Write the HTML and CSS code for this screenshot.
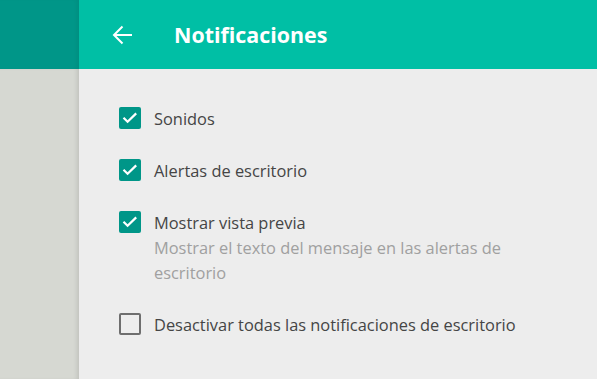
FILE: index.html
```html
<!DOCTYPE html>
<html lang="es">
<head>
  <meta charset="utf-8">
  <title>Notificaciones</title>
  <link rel="stylesheet" href="styles.css">
</head>
<body>
  <div class="app">
    <!-- Left strip of the chat list behind the drawer -->
    <aside class="side">
      <div class="side-header"></div>
      <div class="side-body"></div>
    </aside>

    <section class="drawer">
      <header class="drawer-header">
        <button class="back" type="button" aria-label="Atrás">
          <svg viewBox="0 0 20 20" width="20" height="20" fill="none" stroke="#fff" stroke-width="2">
            <path d="M20 10H2 M10.5 1.5L2 10l8.5 8.5"></path>
          </svg>
        </button>
        <h1>Notificaciones</h1>
      </header>

      <div class="drawer-body">
        <label class="option">
          <span class="check checked">
            <svg viewBox="0 0 22 22" fill="none" stroke="#fff" stroke-width="2.2"><polyline points="4.5 10.8 8.6 14.8 17.2 6.4"></polyline></svg>
          </span>
          <span class="option-text">
            <span class="option-title">Sonidos</span>
          </span>
        </label>

        <label class="option">
          <span class="check checked">
            <svg viewBox="0 0 22 22" fill="none" stroke="#fff" stroke-width="2.2"><polyline points="4.5 10.8 8.6 14.8 17.2 6.4"></polyline></svg>
          </span>
          <span class="option-text">
            <span class="option-title">Alertas de escritorio</span>
          </span>
        </label>

        <label class="option">
          <span class="check checked">
            <svg viewBox="0 0 22 22" fill="none" stroke="#fff" stroke-width="2.2"><polyline points="4.5 10.8 8.6 14.8 17.2 6.4"></polyline></svg>
          </span>
          <span class="option-text">
            <span class="option-title">Mostrar vista previa</span>
            <span class="option-desc">Mostrar el texto del mensaje en las alertas de escritorio</span>
          </span>
        </label>

        <label class="option">
          <span class="check"></span>
          <span class="option-text">
            <span class="option-title">Desactivar todas las notificaciones de escritorio</span>
          </span>
        </label>
      </div>
    </section>
  </div>
</body>
</html>
```

FILE: styles.css
```css
* {
  box-sizing: border-box;
  margin: 0;
  padding: 0;
}

body {
  font-family: 'Open Sans', 'Noto Sans', sans-serif;
  background: #ededed;
  color: #454545;
  overflow: hidden;
}

.app {
  display: flex;
  height: 100vh;
}

.side {
  width: 79px;
  flex-shrink: 0;
  display: flex;
  flex-direction: column;
}

.side-header {
  height: 69px;
  background: #009688;
  box-shadow: inset -4px 0 4px -2px rgba(0, 0, 0, 0.06);
}

.side-body {
  flex: 1;
  background: #d6d8d2;
  box-shadow: inset -4px 0 4px -2px rgba(0, 0, 0, 0.1);
}

.drawer {
  flex: 1;
  display: flex;
  flex-direction: column;
}

.drawer-header {
  height: 69px;
  background: #00bfa5;
  display: flex;
  align-items: center;
  padding-left: 33px;
  color: #fff;
}

.back {
  background: none;
  border: none;
  width: 20px;
  height: 20px;
  display: flex;
  margin-right: 42px;
}

.drawer-header h1 {
  font-size: 21.4px;
  font-weight: 700;
  line-height: 1;
}

.drawer-body {
  padding: 37px 0 0 40px;
  display: flex;
  flex-direction: column;
  gap: 27px;
}

.option {
  display: flex;
  align-items: flex-start;
  gap: 13px;
}

.check {
  width: 22px;
  height: 22px;
  flex-shrink: 0;
  margin-top: 1px;
  border: 2px solid #6e6e6e;
  border-radius: 2px;
  display: flex;
}

.check.checked {
  background: #009688;
  border: none;
}

.check svg {
  width: 100%;
  height: 100%;
}

.option-text {
  display: flex;
  flex-direction: column;
  font-size: 16.4px;
  line-height: 25px;
  max-width: 380px;
}

.option-desc {
  color: #a0a0a0;
}
```
